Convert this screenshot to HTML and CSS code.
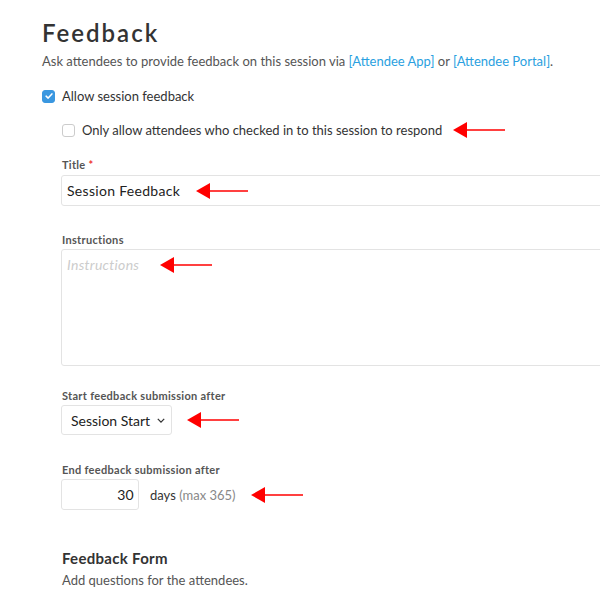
FILE: index.html
```html
<!DOCTYPE html>
<html lang="en">
<head>
    <meta charset="UTF-8">
    <meta name="viewport" content="width=device-width, initial-scale=1.0">
    <title>Session Feedback</title>
    <link rel="stylesheet" href="styles.css">
</head>
<body>
    <div class="panel">
        <h2>Feedback</h2>
        <p class="intro">Ask attendees to provide feedback on this session via <a href="#">[Attendee App]</a> or <a href="#">[Attendee Portal]</a>.</p>

        <label class="check-row">
            <input type="checkbox" checked>
            <span class="box checked">
                <svg viewBox="0 0 12 12" width="10" height="10"><path d="M2.5 6.2 L5 8.5 L9.5 3.5" fill="none" stroke="#fff" stroke-width="1.8" stroke-linecap="round" stroke-linejoin="round"/></svg>
            </span>
            Allow session feedback
        </label>

        <div class="sub">
            <label class="check-row nested">
                <input type="checkbox">
                <span class="box"></span>
                Only allow attendees who checked in to this session to respond
                <span class="pointer inline" style="margin-left: 11px;"><svg viewBox="0 0 52 18" width="52" height="18"><polygon points="0,9 14,1 14,17" fill="#f00"/><line x1="12" y1="9" x2="52" y2="9" stroke="#f00" stroke-width="1.5"/></svg></span>
            </label>

            <div class="form-group title-group">
                <label for="title">Title <span class="req">*</span></label>
                <div class="field">
                    <input type="text" id="title" value="Session Feedback">
                    <span class="pointer" style="left: 134px;"><svg viewBox="0 0 52 18" width="52" height="18"><polygon points="0,9 14,1 14,17" fill="#f00"/><line x1="12" y1="9" x2="52" y2="9" stroke="#f00" stroke-width="1.5"/></svg></span>
                </div>
            </div>

            <div class="form-group instructions-group">
                <label for="instructions">Instructions</label>
                <div class="field">
                    <textarea id="instructions" placeholder="Instructions"></textarea>
                    <span class="pointer" style="left: 98px;"><svg viewBox="0 0 52 18" width="52" height="18"><polygon points="0,9 14,1 14,17" fill="#f00"/><line x1="12" y1="9" x2="52" y2="9" stroke="#f00" stroke-width="1.5"/></svg></span>
                </div>
            </div>

            <div class="form-group start-group">
                <label for="start">Start feedback submission after</label>
                <div class="inline-row">
                    <div class="select" id="start">
                        <span>Session Start</span>
                        <svg viewBox="0 0 10 6" width="8" height="5"><path d="M1 1 L5 5 L9 1" fill="none" stroke="#333" stroke-width="1.6"/></svg>
                    </div>
                    <span class="pointer inline" style="margin-left: 15px;"><svg viewBox="0 0 52 18" width="52" height="18"><polygon points="0,9 14,1 14,17" fill="#f00"/><line x1="12" y1="9" x2="52" y2="9" stroke="#f00" stroke-width="1.5"/></svg></span>
                </div>
            </div>

            <div class="form-group end-group">
                <label for="days">End feedback submission after</label>
                <div class="inline-row">
                    <input type="text" id="days" class="days" value="30">
                    <span class="unit">days <span class="muted">(max 365)</span></span>
                    <span class="pointer inline" style="margin-left: 15px;"><svg viewBox="0 0 52 18" width="52" height="18"><polygon points="0,9 14,1 14,17" fill="#f00"/><line x1="12" y1="9" x2="52" y2="9" stroke="#f00" stroke-width="1.5"/></svg></span>
                </div>
            </div>

            <h3>Feedback Form</h3>
            <p class="hint">Add questions for the attendees.</p>
        </div>
    </div>
</body>
</html>
```

FILE: styles.css
```css
body {
    font-family: Lato, "Noto Sans", sans-serif;
    background-color: #fff;
    color: #333;
    margin: 0;
    padding: 0;
    overflow: hidden;
}

.panel {
    padding: 19px 0 0 42px;
}

h2 {
    font-size: 24px;
    font-weight: 600;
    letter-spacing: 2px;
    color: #333;
    margin: 0;
    line-height: 28px;
}

.intro {
    font-size: 13px;
    color: #555;
    margin: 5px 0 0;
    line-height: 18px;
}

.intro a {
    color: #2a9fe0;
    text-decoration: none;
}

.check-row {
    display: flex;
    align-items: center;
    font-size: 13px;
    color: #333;
    margin-top: 17px;
    line-height: 18px;
}

.check-row input {
    display: none;
}

.box {
    width: 13px;
    height: 13px;
    border: 1px solid #ccc;
    border-radius: 3px;
    margin-right: 7px;
    display: flex;
    align-items: center;
    justify-content: center;
    box-sizing: border-box;
}

.box.checked {
    background-color: #3a97e0;
    border-color: #3a97e0;
}

.sub {
    padding-left: 20px;
}

.check-row.nested {
    margin-top: 16px;
}

.pointer {
    position: absolute;
    top: 7px;
    line-height: 0;
}

.pointer.inline {
    position: static;
}

.form-group label {
    display: block;
    font-size: 11px;
    font-weight: 700;
    letter-spacing: 0.3px;
    color: #555;
    line-height: 14px;
}

.title-group {
    margin-top: 19px;
}

.title-group label {
    margin-bottom: 3px;
}

.instructions-group {
    margin-top: 27px;
}

.instructions-group label {
    margin-bottom: 2px;
}

.start-group {
    margin-top: 23px;
}

.start-group label {
    margin-bottom: 2px;
}

.end-group {
    margin-top: 28px;
}

.end-group label {
    margin-bottom: 2px;
}

.req {
    color: #e33;
}

.field {
    position: relative;
}

input[type="text"], textarea {
    font-family: inherit;
    font-size: 14px;
    letter-spacing: 0.3px;
    color: #222;
    border: 1px solid #e3e3e3;
    border-radius: 3px;
    box-sizing: border-box;
    outline: none;
}

.field input, .field textarea {
    width: 560px;
    margin-left: -1px;
}

.field input {
    height: 31px;
    padding: 0 5px;
}

textarea {
    height: 117px;
    padding: 6px 5px;
    resize: none;
    display: block;
}

textarea::placeholder {
    color: #ccc;
    font-style: italic;
}

.inline-row {
    display: flex;
    align-items: center;
}

.select {
    display: flex;
    align-items: center;
    justify-content: space-between;
    white-space: nowrap;
    height: 30px;
    padding: 0 6px 0 9px;
    border: 1px solid #e3e3e3;
    border-radius: 3px;
    box-sizing: border-box;
    font-size: 14px;
    color: #222;
    margin-left: -1px;
    width: 111px;
}

.days {
    width: 78px;
    height: 31px;
    text-align: right;
    padding: 0 4px;
    margin-left: -1px;
}

.unit {
    font-size: 13px;
    color: #333;
    margin-left: 11px;
}

.muted {
    color: #888;
}

h3 {
    font-size: 15px;
    font-weight: 700;
    letter-spacing: 0.3px;
    color: #333;
    margin: 39px 0 0;
    line-height: 18px;
}

.hint {
    font-size: 13px;
    color: #555;
    margin: 4px 0 0;
    line-height: 18px;
}
```
